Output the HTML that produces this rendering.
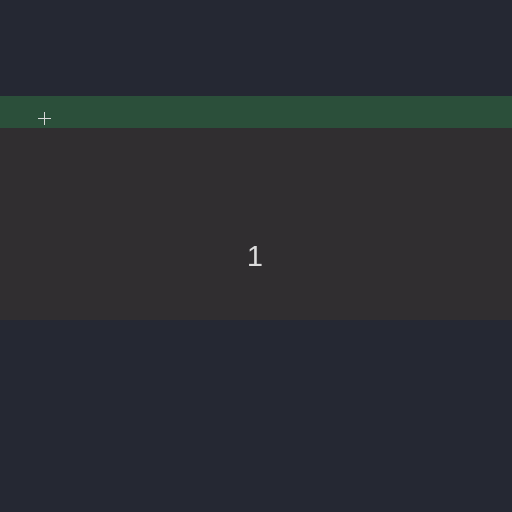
<!DOCTYPE html>
<html><head><style>
body{margin:0;width:512px;height:512px;background:#252833;position:relative;overflow:hidden;font-family:"Liberation Sans",sans-serif}
.g{position:absolute;left:0;top:96px;width:512px;height:32px;background:#2b4f3a}
.p1{position:absolute;left:38px;top:118px;width:13px;height:1px;background:#d8d8d8}
.p2{position:absolute;left:44px;top:112px;width:1px;height:13px;background:#d8d8d8}
.c{position:absolute;left:0;top:128px;width:512px;height:192px;background:#302e30}
.n{position:absolute;left:-1px;width:512px;top:240px;text-align:center;color:#dcdcdc;font-size:29px;line-height:34px}
</style></head><body>
<div class="g"></div><div class="p1"></div><div class="p2"></div>
<div class="c"></div><div class="n">1</div>
</body></html>
